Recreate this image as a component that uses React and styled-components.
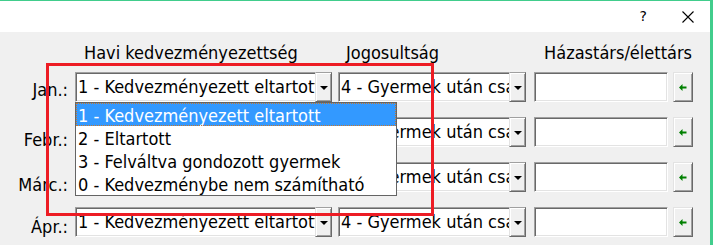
import React from "react";
import styled, { createGlobalStyle } from "styled-components";

const Global = createGlobalStyle`
  html, body { margin: 0; padding: 0; background: #f0f0f0; overflow: hidden; }
  * { box-sizing: border-box; }
`;

const Window = styled.div`
  position: relative;
  width: 713px;
  height: 245px;
  background: #f0f0f0;
  border-top: 1px solid #41cd8c;
  border-right: 3px solid #41cd8c;
  font-family: "DejaVu Sans Condensed", "Liberation Sans", sans-serif;
  font-size: 18px;
  color: #000;
  overflow: hidden;
`;

const TitleBar = styled.div`
  height: 31px;
  background: #fff;
  display: flex;
  justify-content: flex-end;
  align-items: center;
  padding-right: 16px;
  gap: 35px;
`;

const Help = styled.span`
  font-family: "DejaVu Sans", sans-serif;
  font-size: 14px;
  line-height: 14px;
  margin-top: -1px;
`;

const Columns = styled.div`
  display: grid;
  grid-template-columns: 75px 263px 196px 139px 20px;
`;

const Header = styled(Columns)`
  height: 20px;
  line-height: 20px;
  margin-top: 11px;
`;

const Rows = styled(Columns)`
  grid-auto-rows: 30px;
  row-gap: 15px;
  margin-top: 9px;
`;

const Head = styled.div`
  grid-column: ${(p) => p.$col};
  padding-left: ${(p) => p.$pad || 0}px;
  padding-right: ${(p) => p.$padR || 0}px;
  text-align: ${(p) => p.$align || "left"};
  white-space: nowrap;
`;

const Label = styled.div`
  text-align: right;
  padding-right: 7px;
  padding-top: ${(p) => 5 + p.$drop}px;
  line-height: 20px;
  white-space: nowrap;
`;

const Combo = styled.div`
  position: relative;
  width: ${(p) => p.$w}px;
  height: 30px;
  display: flex;
`;

const ComboText = styled.div`
  flex: 1;
  min-width: 0;
  background: #fff;
  border-top: 1px solid #a0a0a0;
  border-left: 1px solid #a0a0a0;
  border-bottom: 1px solid #fff;
  box-shadow: inset 1px 1px #696969, inset 0 -1px #e3e3e3;
  padding-left: 2px;
  line-height: 20px;
  padding-top: 4px;
  white-space: nowrap;
  overflow: hidden;
`;

const DropBtn = styled.div`
  width: 17px;
  height: 30px;
  background: #f0f0f0;
  border-top: 1px solid #a0a0a0;
  border-left: 1px solid #e3e3e3;
  border-right: 1px solid #696969;
  border-bottom: 1px solid #696969;
  box-shadow: inset 1px 1px #fff, inset -1px -1px #a0a0a0;
  display: flex;
  align-items: center;
  justify-content: center;
`;

const Caret = styled.span`
  width: 0;
  height: 0;
  border-left: 4px solid transparent;
  border-right: 4px solid transparent;
  border-top: 4px solid #000;
  margin-top: 1px;
`;

const Edit = styled.div`
  width: 134px;
  height: 30px;
  background: #fff;
  border: 1px solid;
  border-color: #a0a0a0 #fff #fff #a0a0a0;
  box-shadow: inset 1px 1px #696969, inset -1px -1px #e3e3e3;
`;

const ArrowBtn = styled.div`
  width: 20px;
  height: 30px;
  background: #f0f0f0;
  border: 1px solid;
  border-color: #e3e3e3 #696969 #696969 #e3e3e3;
  box-shadow: inset 1px 1px #fff, inset -1px -1px #a0a0a0;
  display: flex;
  align-items: center;
  justify-content: center;
`;

const List = styled.div`
  position: absolute;
  left: 0;
  top: 30px;
  width: 322px;
  background: #fff;
  border: 1px solid #646464;
  z-index: 2;
`;

const Item = styled.div`
  height: 23px;
  line-height: 21px;
  padding: 2px 0 0 2px;
  white-space: nowrap;
  background: ${(p) => (p.$active ? "#3399ff" : "#fff")};
  color: ${(p) => (p.$active ? "#fff" : "#000")};
  outline: ${(p) => (p.$active ? "1px dotted #c8772c" : "none")};
  outline-offset: -1px;
`;

const Marker = styled.div`
  position: absolute;
  left: 46px;
  top: 62px;
  width: 388px;
  height: 153px;
  border: 3px solid #ed1c24;
  pointer-events: none;
  z-index: 3;
`;

const months = [
  { name: "Jan.:", drop: 3 },
  { name: "Febr.:", drop: 8 },
  { name: "Márc.:", drop: 8 },
  { name: "Ápr.:", drop: 5 },
];

const options = [
  "1 - Kedvezményezett eltartott",
  "2 - Eltartott",
  "3 - Felváltva gondozott gyermek",
  "0 - Kedvezménybe nem számítható",
];

function GreenArrow() {
  return (
    <svg width="8" height="7" viewBox="0 0 8 7">
      <path d="M0 3.5 L3.5 0 V2.5 H7.5 V4.5 H3.5 V7 Z" fill="#008000" />
    </svg>
  );
}

function CloseIcon() {
  return (
    <svg width="12" height="12" viewBox="0 0 12 12">
      <path d="M0.5 0.5 L11.5 11.5 M11.5 0.5 L0.5 11.5" stroke="#000" strokeWidth="1.1" />
    </svg>
  );
}

export default function App() {
  return (
    <Window>
      <Global />
      <TitleBar>
        <Help>?</Help>
        <CloseIcon />
      </TitleBar>
      <Header>
        <Head $col="2" $pad={9}>Havi kedvezményezettség</Head>
        <Head $col="3" $pad={8}>Jogosultság</Head>
        <Head $col="4 / 6" $align="right" $padR={1}>Házastárs/élettárs</Head>
      </Header>
      <Rows>
        {months.map((m, i) => (
          <React.Fragment key={m.name}>
            <Label $drop={m.drop}>{m.name}</Label>
            <Combo $w={257}>
              <ComboText>{options[0]}</ComboText>
              <DropBtn><Caret /></DropBtn>
              {i === 0 && (
                <List>
                  {options.map((o, j) => (
                    <Item key={o} $active={j === 0}>{o}</Item>
                  ))}
                </List>
              )}
            </Combo>
            <Combo $w={188}>
              <ComboText>4 - Gyermek után családi pótlékra jogosult</ComboText>
              <DropBtn><Caret /></DropBtn>
            </Combo>
            <Edit />
            <ArrowBtn><GreenArrow /></ArrowBtn>
          </React.Fragment>
        ))}
      </Rows>
      <Marker />
    </Window>
  );
}
